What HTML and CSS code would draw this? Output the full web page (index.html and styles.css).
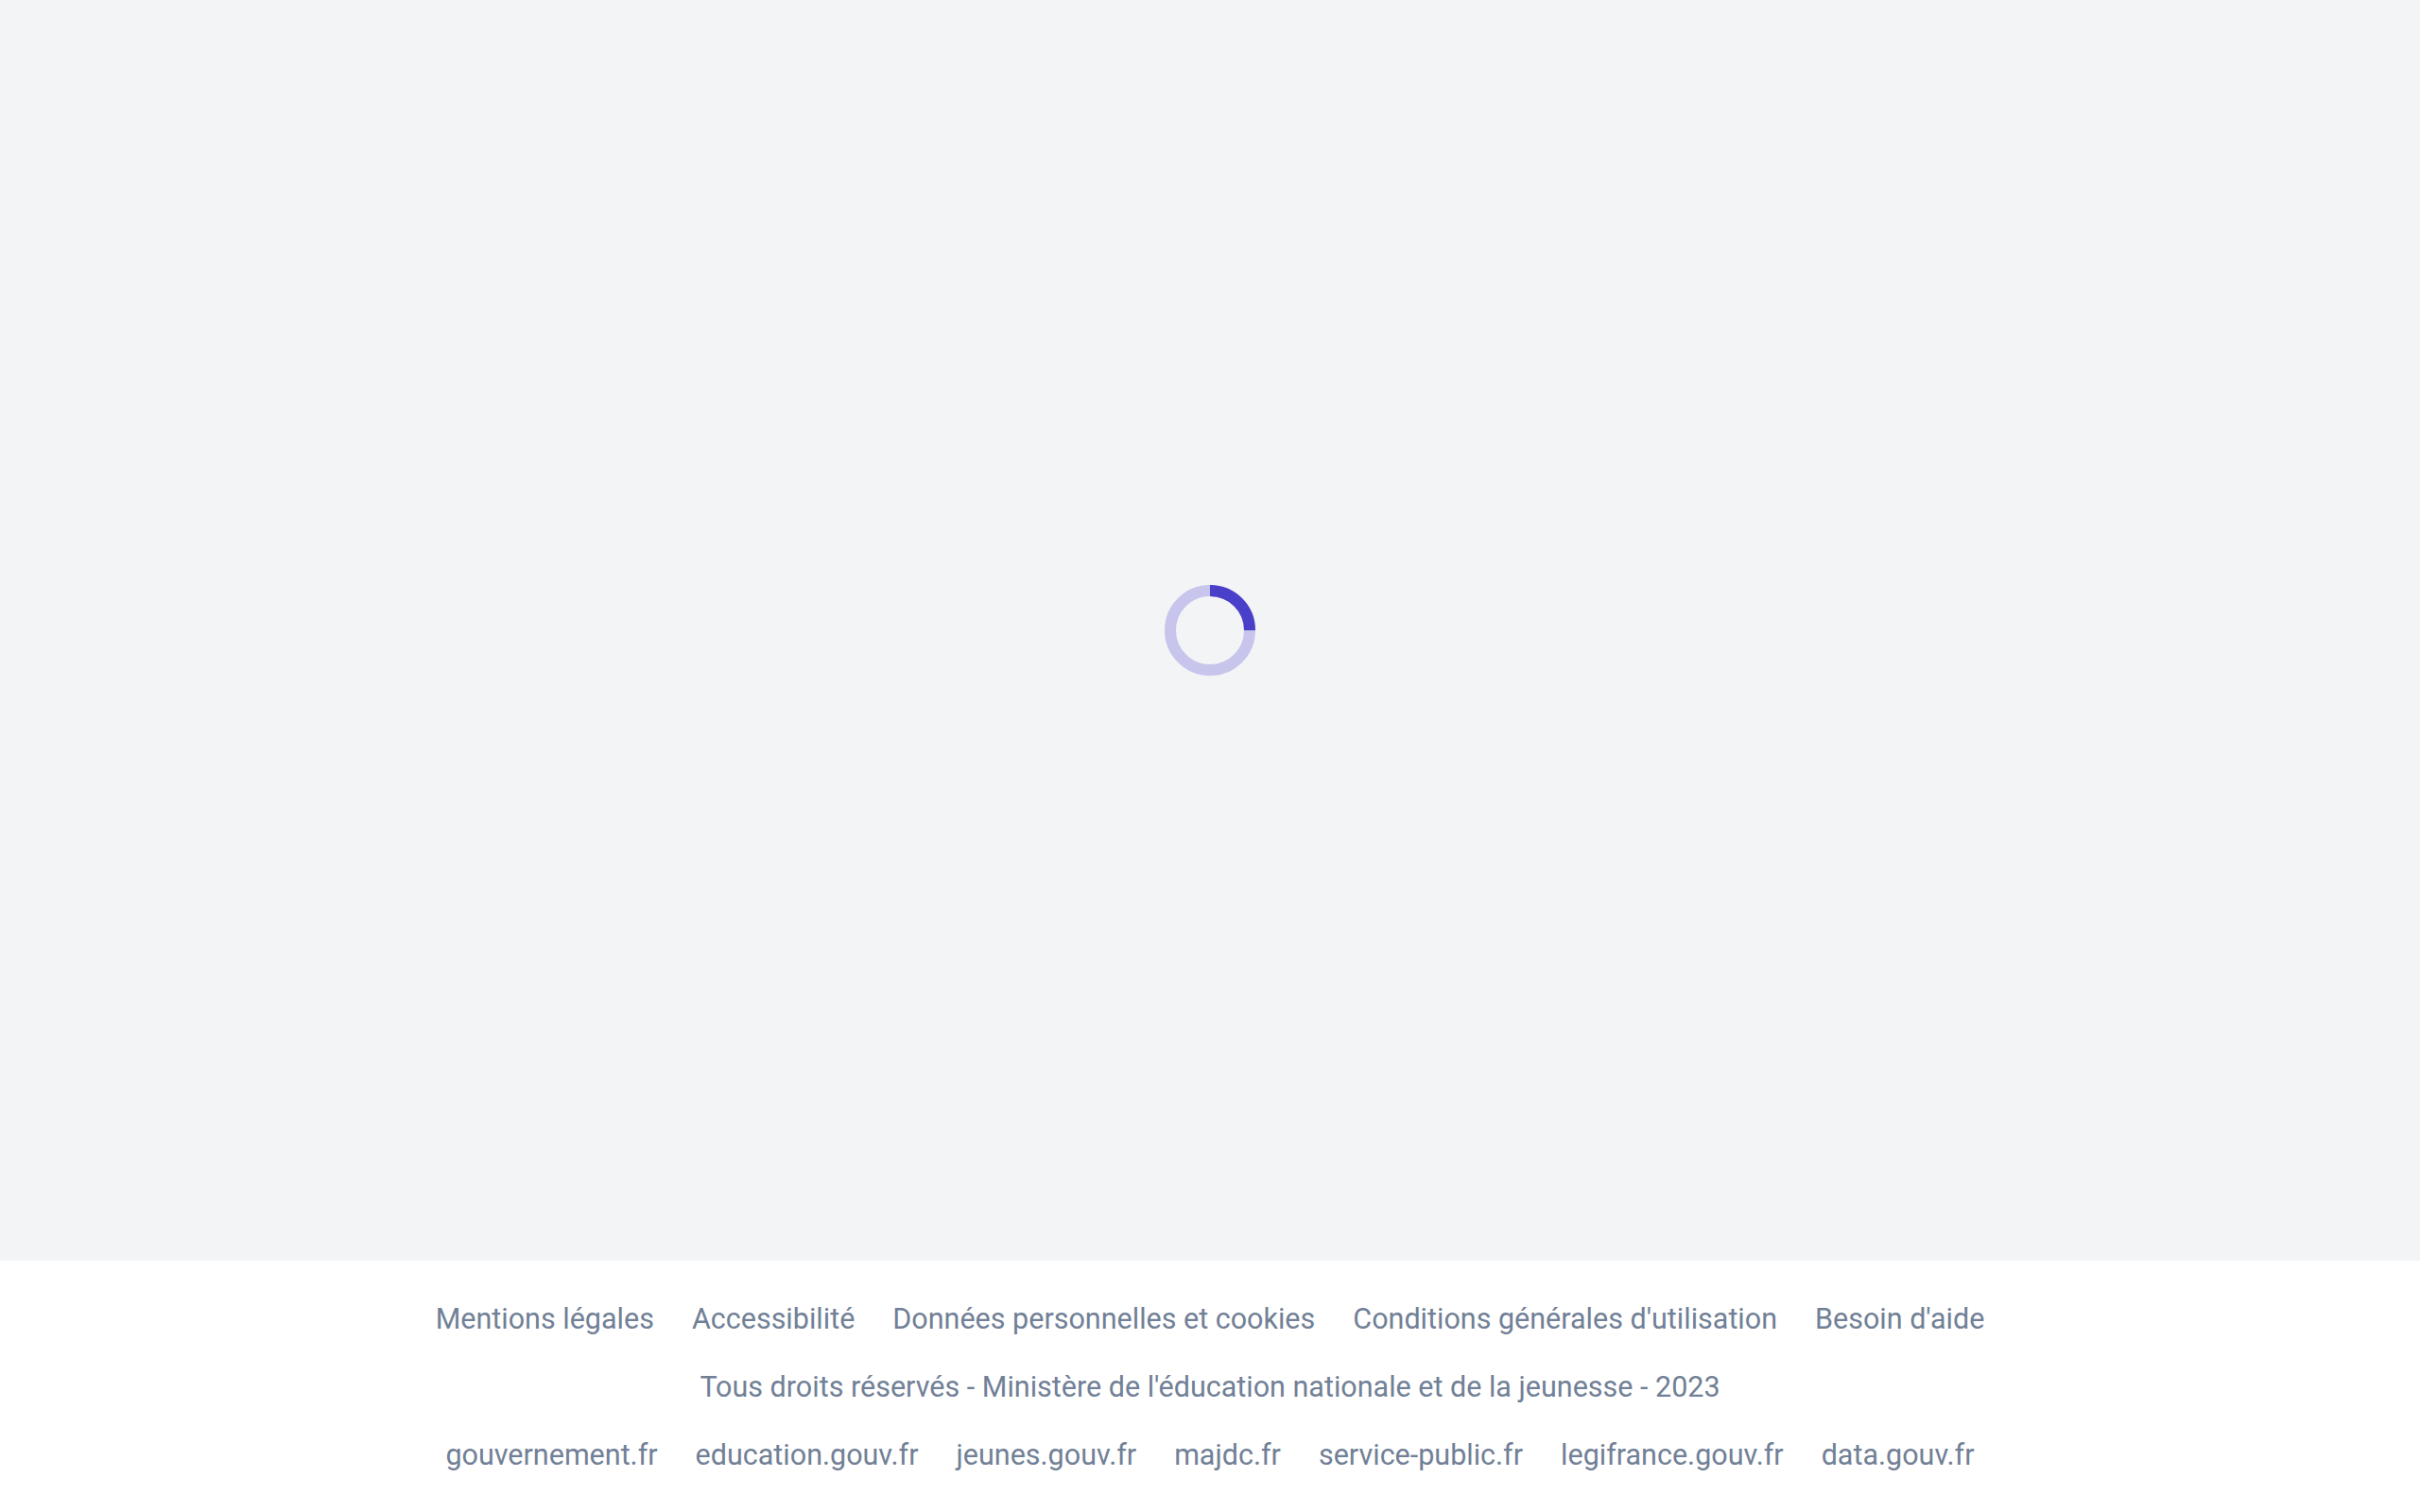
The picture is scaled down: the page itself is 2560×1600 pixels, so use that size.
FILE: index.html
```html
<!DOCTYPE html>
<html lang="fr">
<head>
<meta charset="utf-8">
<title>Chargement</title>
<link rel="stylesheet" href="styles.css">
</head>
<body>
<div class="page">
  <main class="main">
    <svg class="spinner" width="96" height="96" viewBox="0 0 96 96" aria-label="Chargement">
      <circle cx="48" cy="48" r="42" fill="none" stroke="#c7c5ec" stroke-width="12"/>
      <path d="M48 6 A42 42 0 0 1 90 48" fill="none" stroke="#4a3fc9" stroke-width="12"/>
    </svg>
  </main>
  <footer class="footer">
    <nav class="row">
      <a class="link" href="#">Mentions légales</a>
      <a class="link" href="#">Accessibilité</a>
      <a class="link" href="#">Données personnelles et cookies</a>
      <a class="link" href="#">Conditions générales d'utilisation</a>
      <a class="link" href="#">Besoin d'aide</a>
    </nav>
    <p class="row">Tous droits réservés - Ministère de l'éducation nationale et de la jeunesse - 2023</p>
    <nav class="row">
      <a class="link" href="#">gouvernement.fr</a>
      <a class="link" href="#">education.gouv.fr</a>
      <a class="link" href="#">jeunes.gouv.fr</a>
      <a class="link" href="#">majdc.fr</a>
      <a class="link" href="#">service-public.fr</a>
      <a class="link" href="#">legifrance.gouv.fr</a>
      <a class="link" href="#">data.gouv.fr</a>
    </nav>
  </footer>
</div>
</body>
</html>
```
FILE: styles.css
```css
html, body {
  margin: 0;
  padding: 0;
}
body {
  font-family: Roboto, "Liberation Sans", sans-serif;
  background: #f3f4f6;
}
.page {
  min-height: 100vh;
  display: flex;
  flex-direction: column;
}
.main {
  flex: 1;
  display: flex;
  align-items: center;
  justify-content: center;
}
.spinner {
  display: block;
}
.footer {
  background: #ffffff;
  padding: 26px 0 24px;
  display: flex;
  flex-direction: column;
}
.row {
  margin: 0;
  display: flex;
  justify-content: center;
  gap: 40px;
  font-size: 30.5px;
  line-height: 72px;
  color: #718096;
}
.link {
  color: #718096;
  text-decoration: none;
}
```
